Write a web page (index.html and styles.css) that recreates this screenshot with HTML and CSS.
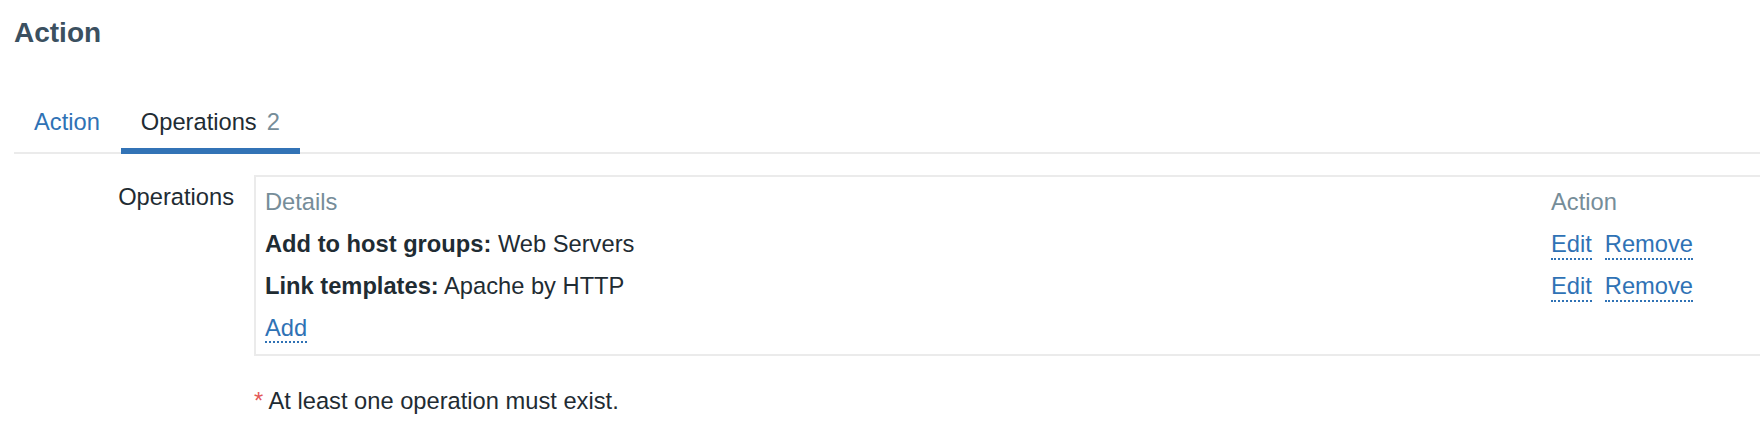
FILE: index.html
```html
<!DOCTYPE html>
<html lang="en">
<head>
    <meta charset="UTF-8">
    <meta name="viewport" content="width=device-width, initial-scale=1.0">
    <title>Action</title>
    <link rel="stylesheet" href="styles.css">
</head>
<body>
    <div class="page">
        <h1 class="page-title">Action</h1>

        <nav class="tabs">
            <a href="#" class="tab">Action</a>
            <a href="#" class="tab tab-active">Operations<span class="tab-count">2</span></a>
        </nav>

        <div class="form-row">
            <label class="form-label">Operations</label>
            <div class="ops-box">
                <table class="ops-table">
                    <thead>
                        <tr>
                            <th class="col-details">Details</th>
                            <th>Action</th>
                        </tr>
                    </thead>
                    <tbody>
                        <tr>
                            <td><strong>Add to host groups:</strong> Web Servers</td>
                            <td>
                                <div class="row-actions">
                                    <a href="#" class="link">Edit</a>
                                    <a href="#" class="link">Remove</a>
                                </div>
                            </td>
                        </tr>
                        <tr>
                            <td><strong>Link templates:</strong> Apache by HTTP</td>
                            <td>
                                <div class="row-actions">
                                    <a href="#" class="link">Edit</a>
                                    <a href="#" class="link">Remove</a>
                                </div>
                            </td>
                        </tr>
                        <tr>
                            <td colspan="2"><a href="#" class="link">Add</a></td>
                        </tr>
                    </tbody>
                </table>
            </div>
        </div>

        <p class="form-note"><span class="asterisk">*</span> At least one operation must exist.</p>
    </div>
</body>
</html>
```

FILE: styles.css
```css
body {
    font-family: "Liberation Sans", Arial, sans-serif;
    font-size: 23.7px;
    line-height: 28px;
    color: #1f2c33;
    background: #ffffff;
    margin: 0;
    padding: 0;
    overflow: hidden;
}
.page {
    padding: 0 0 0 14px;
}
.page-title {
    font-size: 28px;
    line-height: 34px;
    font-weight: bold;
    color: #3b5060;
    margin: 16px 0 0;
}
.tabs {
    display: flex;
    margin-top: 46px;
    border-bottom: 2px solid #ebebeb;
}
.tab {
    color: #2f72b5;
    text-decoration: none;
    padding: 12px 20px 12px;
    margin-bottom: -2px;
    border-bottom: 6px solid transparent;
}
.tab + .tab {
    margin-left: 1px;
}
.tab-active {
    color: #1f2c33;
    border-bottom-color: #3273b6;
}
.tab-count {
    color: #768d99;
    margin-left: 10px;
}
.form-row {
    display: flex;
    margin-top: 21px;
}
.form-label {
    width: 220px;
    text-align: right;
    padding-top: 8px;
    margin-right: 20px;
}
.ops-box {
    flex: 1;
    margin-right: -60px;
    border: 2px solid #ebebeb;
    padding: 4px 0 5px;
}
.ops-table {
    border-collapse: collapse;
}
.ops-table th,
.ops-table td {
    padding: 7px 9px;
    height: 28px;
    text-align: left;
    white-space: nowrap;
    vertical-align: top;
}
.ops-table th {
    font-weight: normal;
    color: #768d99;
}
.col-details {
    width: 1268px;
}
.row-actions {
    display: flex;
    align-items: flex-start;
    gap: 13px;
    height: 28px;
}
.link {
    color: #2f72b5;
    text-decoration: none;
    border-bottom: 2px dotted #2f72b5;
}
.form-note {
    margin: 31px 0 0 240px;
}
.asterisk {
    color: #e45959;
}
```
